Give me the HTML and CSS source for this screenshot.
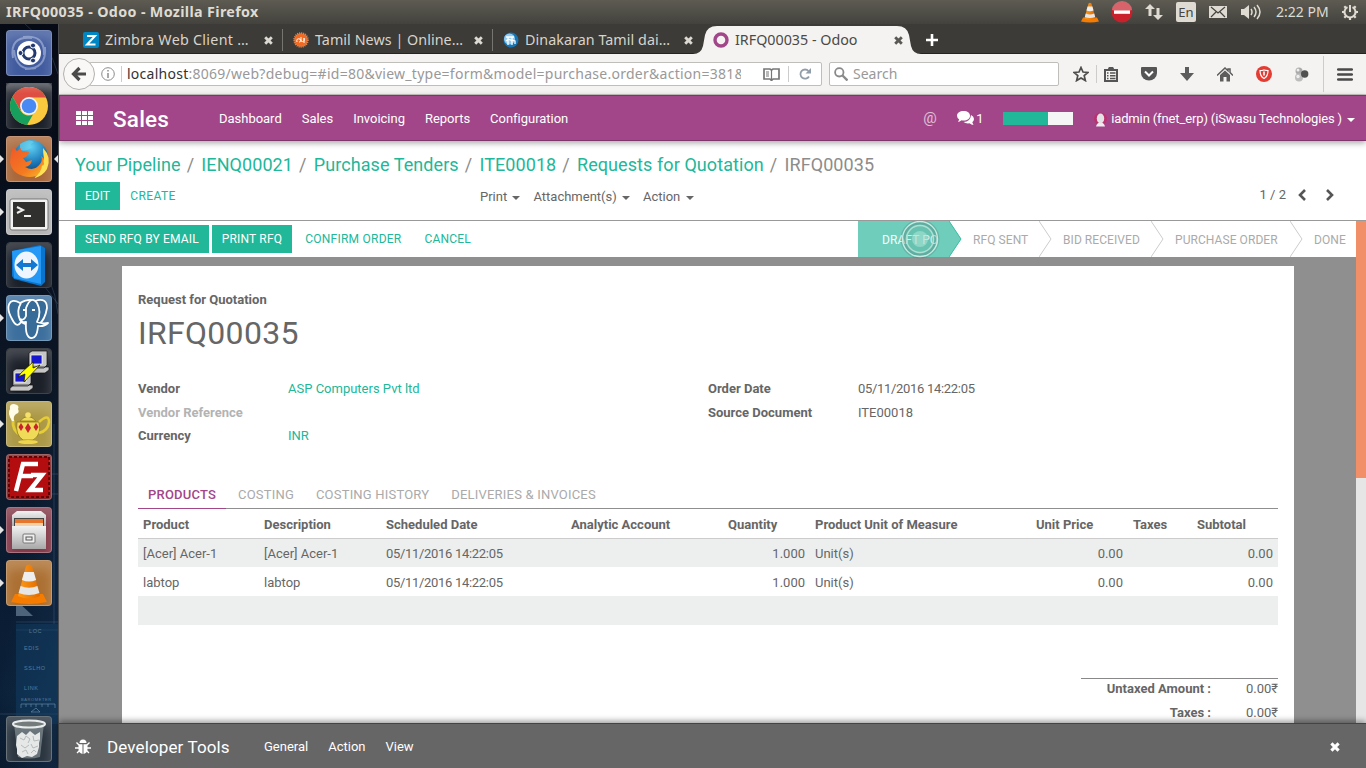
FILE: index.html
```html
<!DOCTYPE html>
<html lang="en">
<head>
<meta charset="utf-8">
<title>IRFQ00035 - Odoo</title>
<link rel="stylesheet" href="styles.css">
</head>
<body>
<svg class="defs" width="0" height="0" aria-hidden="true">
  <defs>
    <linearGradient id="gloss" x1="0" y1="0" x2="0" y2="1"><stop offset="0" stop-color="#fff" stop-opacity=".45"/><stop offset=".5" stop-color="#fff" stop-opacity=".05"/><stop offset="1" stop-color="#fff" stop-opacity="0"/></linearGradient>
    <linearGradient id="silver" x1="0" y1="0" x2="0" y2="1"><stop offset="0" stop-color="#f2f2f2"/><stop offset="1" stop-color="#a8a8a8"/></linearGradient>
    <linearGradient id="orange" x1="0" y1="0" x2="1" y2="0"><stop offset="0" stop-color="#ff9c1a"/><stop offset="1" stop-color="#e06a00"/></linearGradient>
    <radialGradient id="globe" cx=".5" cy=".2" r=".8"><stop offset="0" stop-color="#5fd0f2"/><stop offset=".6" stop-color="#1b78b8"/><stop offset="1" stop-color="#0d3c74"/></radialGradient>
    <linearGradient id="flame" x1="0" y1="0" x2="1" y2="1"><stop offset="0" stop-color="#f0582a"/><stop offset=".6" stop-color="#f47a20"/><stop offset="1" stop-color="#f9c22b"/></linearGradient>
    <symbol id="x" viewBox="0 0 10 10"><path d="M2 2l6 6M8 2l-6 6" stroke="currentColor" stroke-width="2.6"/></symbol>
    <symbol id="cone" viewBox="0 0 36 40"><path d="M4 30h28l4 8q-18 4-36 0z" fill="#f57c00"/><path d="M15 2q3-3 6 0l8 30q-11 5-22 0z" fill="url(#orange)"/><path d="M13.2 8h9.600l2.300 8q-7 3-14.200 0z" fill="#eee"/><path d="M9.600 22q8.400 3.500 16.800 0l2 7q-10.400 4-20.800 0z" fill="#e6e6e6"/></symbol>
  </defs>
</svg>
<header class="panel">
  <span class="panel-title">IRFQ00035 - Odoo - Mozilla Firefox</span>
  <div class="tray">
    <svg width="18" height="21"><use href="#cone"/></svg>
    <svg width="22" height="22" viewBox="0 0 22 22"><circle cx="11" cy="11" r="10.500" fill="#c9202b"/><path d="M1 9a10 9 0 0 1 20 0q-10 4-20 0" fill="#fff" opacity=".3"/><rect x="3" y="9.500" width="16" height="3.300" fill="#fff"/></svg>
    <svg width="18" height="18" viewBox="0 0 18 18" fill="#dfdbd2"><path d="M5 1l5 5H6.500v7h-3V6H0zM13 17l5-5h-3.500V5h-3v7H8z"/></svg>
    <span class="lang">En</span>
    <svg width="18" height="12" viewBox="0 0 18 12"><rect width="18" height="12" fill="#dfdbd2"/><path d="M2 1l7 6 7-6M2 11l5-5M16 11l-5-5" fill="none" stroke="#45443f" stroke-width="1.200"/></svg>
    <svg width="20" height="16" viewBox="0 0 20 16"><path d="M0 5h3l5-4v14l-5-4H0z" fill="#dfdbd2"/><path d="M10 5q2 3 0 6M13 3q4 5 0 10M16 1q6 7 0 14" fill="none" stroke="#dfdbd2" stroke-width="1.500"/></svg>
    <span class="clock">2:22 PM</span>
    <svg width="18" height="18" viewBox="0 0 18 18" fill="none" stroke="#dfdbd2"><path d="M6.500 4.100a5.500 5.500 0 1 0 5 0M9 2v7" stroke-width="2"/><path d="M9 17v-3M1 9h3M14 9h3M3.300 14.700l2-2M14.700 14.700l-2-2M3.300 3.300l2 2M14.700 3.300l-2 2" stroke-width="2.200"/></svg>
  </div>
</header>
<div class="desktop">
  <nav class="launcher">
    <svg class="wall" width="58" height="744" viewBox="0 0 58 744"><g fill="none" stroke="#5f88ad" stroke-width=".8" opacity=".35"><path d="M25 0q25 20 33 50M30 230q24 20 28 60M35 250l23 30M16 450h42M16 470h42M54 400v200M36 560l10 8M16 598h42M16 606h42M0 690h58"/></g><path d="M16 592L33 592L16 576z" fill="#8da7bd" opacity=".5"/><path d="M16 600h42v100H16z" fill="#123d63" opacity=".5"/><g fill="#8bb3d4" opacity=".55" font-family="Liberation Sans" font-size="5.500" letter-spacing=".6"><text x="29" y="609">LOC</text><text x="24" y="626">EDIS</text><text x="24" y="646">SSLHO</text><text x="24" y="666">LINK</text><text x="21" y="677" font-size="4">BAROMETER</text></g><path d="M21 684v-4h34v4M26 680v3M31 680v3M36 680v3M42 680v3M48 680v3M31 688l5-4 4 4z" stroke="#6f95b5" fill="none" opacity=".6"/></svg>
    <div class="app app-dash"><svg viewBox="0 0 46 46"><g fill="none" stroke="#b9c6e6" stroke-width="2" opacity=".55"><path d="M7 28Q3 6 26 8M17 7q22-3 21 18M39 17q2 22-20 22M30 38Q10 42 8 20"/></g><circle cx="23" cy="23" r="12" fill="#fff"/><circle cx="23" cy="23" r="6" fill="none" stroke="#223a70" stroke-width="3"/><g fill="#223a70" stroke="#fff" stroke-width="1"><circle cx="14.500" cy="23" r="2.500"/><circle cx="27" cy="15.500" r="2.500"/><circle cx="27" cy="30.500" r="2.500"/></g></svg></div>
    <div class="app app-dark"><svg viewBox="0 0 46 46"><circle cx="23" cy="23" r="19" fill="#fbc93d"/><path d="M6.500 13.500A19 19 0 0 1 40 14.500H23L14.600 27.500z" fill="#dd4b3e"/><path d="M6.500 13.500l8.200 14.500A9.500 9.500 0 0 0 27 31.500L21 42A19 19 0 0 1 6.500 13.500z" fill="#17a05d"/><circle cx="23" cy="23" r="9" fill="#f2f2f2"/><circle cx="23" cy="23" r="7.300" fill="#4889f4"/><rect width="46" height="20" fill="url(#gloss)" opacity=".5"/></svg></div>
    <div class="app app-fox run focus"><svg viewBox="0 0 46 46"><circle cx="25" cy="21" r="17" fill="url(#globe)"/><path d="M14 8q9-6 14-2-5 2-3 6-5 4-11 2z" fill="#6fd3ee" opacity=".6"/><path d="M7 11l4 4 4-3v3l8 1q-1 5-6 6l3 4 6-2q-1 6-7 7 9 5 15-3 3-4 1-8 5 3 4 8l2-11q3 13-5 20-9 6-19 3Q5 36 4 26q0-8 3-15z" fill="url(#flame)"/><path d="M37 12q9 9 4 21-4 7-13 9 8-6 8-13 1 2 2-1-1-3 0-5-1-6-1-11z" fill="#ffe153"/></svg></div>
    <div class="app app-grey run"><svg viewBox="0 0 46 46"><rect x="4" y="10" width="38" height="31" rx="2" fill="#f2f2f2" stroke="#777"/><rect x="7" y="13" width="32" height="25" fill="#30312f"/><path d="M11 18l6 3-6 3" fill="none" stroke="#eee" stroke-width="2"/><path d="M18 27h7" stroke="#eee" stroke-width="2"/></svg></div>
    <div class="app app-dark"><svg viewBox="0 0 46 46"><path d="M6 9L34 3l5 3v34l-4 4L8 37l-2-3z" fill="#0874ce"/><path d="M6 9l29-5v38L8 36z" fill="#2599f5"/><ellipse cx="20.500" cy="23" rx="12" ry="13.500" fill="#eef5fc"/><path d="M10 23l7-6v4h8v-4l7 6-7 6v-4h-8v4z" fill="#1278d2"/></svg></div>
    <div class="app app-pg run"><svg viewBox="0 0 46 46" fill="#376b98" stroke="#fff" stroke-width="1.800" stroke-linejoin="round"><path d="M14 8C3 1-1 12 6 24q5 10 9 3l4 2h14q6-4 8-16Q41 2 29 6q-6-3-15 2z"/><path d="M15 8q-5 8-1 17l4 3M31 8q5 9 0 19 5 2 11 1-4 4-10 3-1 13-7 12-6-1-5-16-6 1-6-3 4 2 6-3V13Q25 0 31 8z"/><path d="M17 15h3M29 15h-3" stroke-width="2"/></svg></div>
    <div class="app app-dark"><svg viewBox="0 0 46 46" stroke="#111" stroke-width=".7"><g id="pc"><path d="M23 5l3-2h15v14l-3 3H23zM20 22l4-3h19v3l-4 3H20z" fill="#c6c6c6"/><path d="M25 7h11v9H25z" fill="#1717ce" stroke="#fff"/></g><use href="#pc" x="-16" y="18"/><path d="M15 25l12-11v6l7-3-16 17 1-8-7 3z" fill="#ff0"/></svg></div>
    <div class="app app-lamp run"><svg viewBox="0 0 46 46"><path d="M15 34q-9-4-8-15" fill="none" stroke="#e2cb36" stroke-width="3"/><path d="M11 21h22q3 13-6 18H17q-8-5-6-18zM14 20q8-9 16 0z" fill="#f0db58" stroke="#8f7a1c" stroke-width=".8"/><path d="M33 21q10-9 10 0-1 9-10 11" fill="none" stroke="#e7cd36" stroke-width="2.500"/><ellipse cx="22" cy="41" rx="10" ry="2" fill="#eed54c"/><circle cx="22" cy="14" r="2.800" fill="#f4e06a"/><g fill="#c9242d"><path d="M15 22l2.500 4-2.500 4-2.500-4zM22 22l3 5-3 5-3-5zM30 22l2.500 4-2.500 4-2.500-4z"/></g><path d="M6 20Q1 12 4 8q-1-5 4-5 6 1 4 5 2 4-2 5-3 2-2 7z" fill="#fffde8"/></svg></div>
    <div class="app app-fz"><svg viewBox="0 0 46 46"><rect x="3" y="3" width="40" height="40" fill="#b30d10" stroke="#600" stroke-width="2" stroke-dasharray="3 2"/><g stroke="#fff" stroke-width="4.500" fill="none"><path d="M10 37l7-27h15M14 22h13M25 21h11L24 36h13"/></g></svg></div>
    <div class="app app-files run"><svg viewBox="0 0 46 46"><path d="M6 8l5-4h24l5 4v12H6z" fill="url(#silver)"/><rect x="8" y="11" width="30" height="8" fill="#444"/><path d="M9 12h28v7H9z" fill="#e6762d"/><path d="M9 16h28v3H9z" fill="#f7d0a5"/><path d="M6 19h34v23H6z" fill="url(#silver)"/><rect x="17" y="27" width="12" height="9" rx="1" fill="#eee" stroke="#777"/><rect x="20" y="30" width="6" height="3" fill="none" stroke="#555"/></svg></div>
    <div class="app app-vlc run"><svg viewBox="-5 -4 46 46"><svg width="36" height="40"><use href="#cone"/></svg></svg></div>
    <div class="app app-trash"><svg viewBox="0 0 46 46"><path d="M8 8h30l-4 33q-11 3-22 0z" fill="#9da9a9" opacity=".55"/><path d="M11 20l5-4 4 3 4-4 5 4 5-3v7l-1 4v4l-2 7-5 3-5-1-5 2-5-4v-5l-1-4z" fill="#e6e8e8"/><path d="M14 22l4 2 2-4 4 3-2 4M27 20l1 5 5-1M15 29l4 3 4-3M25 28l2 4 5-2M16 36l4-2 2 4M25 37l3-3 2 2" fill="none" stroke="#b4baba"/><ellipse cx="23" cy="8" rx="16" ry="3.500" fill="#737b7b" stroke="#e8ecec" stroke-width="2"/></svg></div>
  </nav>
  <main class="browser">
    <div class="tabs">
      <div class="tab"><svg class="fav" viewBox="0 0 16 16"><rect width="16" height="16" rx="2" fill="#0087c3"/><path d="M4 4h8l-8 8.500h8.500" fill="none" stroke="#fff" stroke-width="2"/></svg><span class="t t1">Zimbra Web Client …</span><svg class="close"><use href="#x"/></svg></div>
      <div class="tab"><svg class="fav" viewBox="0 0 16 16"><circle cx="8" cy="8" r="6.800" fill="#f26a21" stroke="#d98a5a" stroke-width="2" stroke-dasharray="1 1"/><path d="M4 10q-1-4 3-3 2 3-1 3M8 5v4q4 2 3-3v5" fill="none" stroke="#fff"/></svg><span class="t t2">Tamil News | Online…</span><svg class="close"><use href="#x"/></svg></div>
      <div class="tab"><svg class="fav" viewBox="0 0 16 16"><circle cx="8" cy="8" r="7.500" fill="#1675b5"/><circle cx="6.500" cy="7" r="5.500" fill="#8fcaf0"/><path d="M3 5h8M5 5v4M3 9q3-3 6 0v4M9 5v3l3 1v3M5 9v4" fill="none" stroke="#fff" stroke-width="1.300"/></svg><span class="t t3">Dinakaran Tamil dai…</span><svg class="close"><use href="#x"/></svg></div>
      <div class="tab active"><svg class="tab-shape" viewBox="0 0 228 28" width="228" height="28"><path d="M0 28q8 0 10-8l2-11Q14 0 24 0h180q10 0 12 9l2 11q2 8 10 8z" fill="#f4f3f1"/></svg><svg class="fav" viewBox="0 0 16 16"><circle cx="8" cy="8" r="6" fill="none" stroke="#a24689" stroke-width="3.400"/></svg><span class="t t4">IRFQ00035 - Odoo</span><svg class="close"><use href="#x"/></svg></div>
      <svg class="plus" viewBox="0 0 14 14"><path d="M7 1v12M1 7h12" stroke="#fff" stroke-width="2.600"/></svg>
    </div>
    <div class="toolbar">
      <div class="back"><svg width="16" height="16" viewBox="0 0 16 16"><path d="M15 8H3M8.500 2L2.500 8l6 6" fill="none" stroke="#4a4a4a" stroke-width="3.200"/></svg></div>
      <div class="url">
        <svg width="14" height="14" viewBox="0 0 14 14" fill="none" stroke="#8c8c8c"><circle cx="7" cy="7" r="6.300"/><path d="M7 3v1.600M7 6v5" stroke-width="1.500"/></svg>
        <i class="sep"></i>
        <span class="addr"><b>localhost</b>:8069/web?debug=#id=80&amp;view_type=form&amp;model=purchase.order&amp;action=381&amp;</span>
        <svg width="17" height="13" viewBox="0 0 17 13" fill="none" stroke="#777"><path d="M1 1h6l1.500 1L10 1h6v10h-6l-1.500 1.500L7 11H1z" stroke-width="1.700"/><path d="M8.500 2v10M3 4h3M3 6h3M3 8h3" stroke-width="1.200"/></svg>
        <i class="sep s2"></i>
        <svg width="12" height="12" viewBox="0 0 12 12"><path d="M10 8.500A4.600 4.600 0 1 1 9.500 3" fill="none" stroke="#919da9" stroke-width="1.800"/><path d="M12 0v5.500H6.500z" fill="#919da9"/></svg>
      </div>
      <div class="search"><svg width="14" height="14" viewBox="0 0 14 14" fill="none" stroke="#8a8a8a"><circle cx="5.300" cy="5.300" r="4.200" stroke-width="1.800"/><path d="M8.500 8.500l5 5" stroke-width="2.400"/></svg><span>Search</span></div>
      <div class="tools">
        <svg width="16" height="16" viewBox="0 0 16 16"><path d="M8 1.500l2 4.500 5 .4-3.800 3.200 1.200 5L8 12l-4.400 2.600 1.200-5L1 6.400 6 6z" fill="none" stroke="#4d4d4d" stroke-width="1.700"/></svg><i class="vs"></i>
        <svg width="14" height="15" viewBox="0 0 14 15"><path d="M1 3h12v11H1zM4.500 3l1-2h3l1 2" fill="none" stroke="#555" stroke-width="2"/><path d="M3 6h1.500M6 6h5.500M3 8.800h1.500M6 8.800h5.500M3 11.500h1.500M6 11.500h5.500" stroke="#555" stroke-width="1.400"/></svg>
        <svg width="16" height="14" viewBox="0 0 16 14"><path d="M1 0h14q1 0 1 1v5a8 7.500 0 0 1-16 0V1q0-1 1-1z" fill="#555"/><path d="M4 4.500l4 4 4-4" fill="none" stroke="#fff" stroke-width="2"/></svg>
        <svg width="14" height="14" viewBox="0 0 14 14"><path d="M5 0h4v6h5l-7 8-7-8h5z" fill="#5c5c5c"/></svg>
        <svg width="16" height="15" viewBox="0 0 16 15"><path d="M0 8.500L8 1l3 2.700V2h2v3.500l3 3" fill="none" stroke="#5c5c5c" stroke-width="1.500"/><path d="M3 8l5-4.500L13 8v6.500H9.500V10h-3v4.500H3z" fill="#5c5c5c"/></svg>
        <svg width="16" height="16" viewBox="0 0 16 16"><circle cx="8" cy="8" r="8" fill="#e43c32"/><path d="M4 4.500q4 0 4-1 0 1 4 1 0 6-4 8-4-2-4-8z" fill="none" stroke="#fff" stroke-width="1.200"/><path d="M8 5.500v4" stroke="#fff" stroke-width="1.600"/></svg>
        <svg width="14" height="15" viewBox="0 0 14 15"><circle cx="4" cy="4" r="3.500" fill="#aaa"/><circle cx="4" cy="10.500" r="4" fill="#bcbcbc"/><circle cx="9.700" cy="7" r="3.700" fill="#505050"/><circle cx="3" cy="3" r="1.500" fill="#eee"/><circle cx="3" cy="9.500" r="1.700" fill="#eee"/></svg>
        <i class="vs v2"></i>
        <svg width="16" height="13" viewBox="0 0 16 13"><path d="M1.200 1.500h13.600M1.200 6.500h13.600M1.200 11.500h13.600" stroke="#4a4a4a" stroke-width="2.600" stroke-linecap="round"/></svg>
      </div>
    </div>
    <div class="odoo">
      <nav class="menu">
        <svg class="grid" width="17" height="14" viewBox="0 0 17 14" fill="#fff"><path d="M0 0h5v4H0zM6 0h5v4H6zM12 0h5v4h-5zM0 5h5v4H0zM6 5h5v4H6zM12 5h5v4h-5zM0 10h5v4H0zM6 10h5v4H6zM12 10h5v4h-5z"/></svg>
        <span class="brand">Sales</span>
        <div class="links"><a>Dashboard</a><a>Sales</a><a>Invoicing</a><a>Reports</a><a>Configuration</a></div>
        <div class="user">
          <span class="at">@</span>
          <svg width="17" height="14" viewBox="0 0 17 14" fill="#fff"><path d="M6.500 0c4 0 6.500 2 6.500 4.700S10.500 9.500 6.500 9.500q-1 0-2-.2Q2.500 11 1 11l1.200-2.600Q0 7 0 4.700C0 2 3 0 6.500 0z"/><path d="M14 4q3 1.500 3 4 0 1.800-1.700 3.200L16.500 14q-2 0-4-1.700-3.500.6-6-1.300 7-.2 7.500-7z"/></svg><span class="one">1</span>
          <div class="progress"><i></i></div>
          <svg class="avatar" width="13" height="15" viewBox="0 0 13 15"><circle cx="6.500" cy="7" r="6.500" fill="#ba3170"/><path d="M2 14.500q1-4 4.500-4t4.500 4z" fill="#eee"/><ellipse cx="6.500" cy="6.500" rx="3.700" ry="5" fill="#e2e3e4"/></svg>
          <span class="name">iadmin (fnet_erp) (iSwasu Technologies )</span><i class="caret"></i>
        </div>
      </nav>
      <section class="control">
        <div class="crumbs"><a>Your Pipeline</a><i>/</i><a>IENQ00021</a><i>/</i><a>Purchase Tenders</a><i>/</i><a>ITE00018</a><i>/</i><a>Requests for Quotation</a><i>/</i><span>IRFQ00035</span></div>
        <div class="actions">
          <button class="btn primary b0">EDIT</button><button class="btn b1">CREATE</button>
          <div class="drops"><span>Print <i class="caret"></i></span><span>Attachment(s) <i class="caret"></i></span><span>Action <i class="caret"></i></span></div>
          <div class="pager"><span>1 / 2</span><svg width="8" height="12" viewBox="0 0 8 12"><path d="M7 1L2 6l5 5" fill="none" stroke="#555" stroke-width="2.600"/></svg><svg width="8" height="12" viewBox="0 0 8 12"><path d="M1 1l5 5-5 5" fill="none" stroke="#555" stroke-width="2.600"/></svg></div>
        </div>
      </section>
      <div class="view">
        <div class="content">
          <div class="status">
            <button class="btn primary">SEND RFQ BY EMAIL</button><button class="btn primary b2">PRINT RFQ</button><button class="btn b3">CONFIRM ORDER</button><button class="btn b4">CANCEL</button>
            <div class="steps">
              <div class="step now"><svg class="arrow" width="13" height="36" viewBox="0 0 13 36"><path d="M0 0l12 18L0 36z" fill="#6ecebb"/><path d="M0 0l12 18L0 36" fill="none" stroke="#35bba0"/></svg>DRAFT PO<svg class="click" width="42" height="42" viewBox="0 0 42 42"><circle cx="21" cy="21" r="18" fill="#45695f" opacity=".12"/><circle cx="21" cy="21" r="17" fill="none" stroke="#456" stroke-width="5" opacity=".2"/><circle cx="21" cy="21" r="17.500" fill="none" stroke="#c5ede3" stroke-width="1.400"/><circle cx="21" cy="21" r="13.500" fill="none" stroke="#b0dfd4" stroke-width="1.400"/><circle cx="21" cy="21" r="8" fill="#a9e2d6" opacity=".6"/></svg></div>
              <div class="step p2">RFQ SENT<svg class="arrow" width="13" height="36" viewBox="0 0 13 36"><path d="M0 0l12 18L0 36" fill="none" stroke="#ccc"/></svg></div>
              <div class="step p3">BID RECEIVED<svg class="arrow" width="13" height="36" viewBox="0 0 13 36"><path d="M0 0l12 18L0 36" fill="none" stroke="#ccc"/></svg></div>
              <div class="step p4">PURCHASE ORDER<svg class="arrow" width="13" height="36" viewBox="0 0 13 36"><path d="M0 0l12 18L0 36" fill="none" stroke="#ccc"/></svg></div>
              <div class="step p5">DONE</div>
            </div>
          </div>
          <div class="sheet">
            <div class="kind">Request for Quotation</div>
            <h1>IRFQ00035</h1>
            <div class="fields">
              <b>Vendor</b><a>ASP Computers Pvt ltd</a><b>Order Date</b><span class="date">05/11/2016 14:22:05</span>
              <b class="muted">Vendor Reference</b><span></span><b>Source Document</b><span>ITE00018</span>
              <b>Currency</b><a>INR</a>
            </div>
            <div class="nb"><span class="on">PRODUCTS</span><span>COSTING</span><span>COSTING HISTORY</span><span>DELIVERIES &amp; INVOICES</span></div>
            <table>
              <colgroup><col class="c1"><col class="c2"><col class="c3"><col class="c4"><col class="c5"><col class="c6"><col class="c7"><col class="c8"><col class="c9"></colgroup>
              <thead><tr><th>Product</th><th>Description</th><th>Scheduled Date</th><th>Analytic Account</th><th>Quantity</th><th>Product Unit of Measure</th><th>Unit Price</th><th>Taxes</th><th>Subtotal</th></tr></thead>
              <tbody>
                <tr><td>[Acer] Acer-1</td><td>[Acer] Acer-1</td><td class="date">05/11/2016 14:22:05</td><td></td><td class="r">1.000</td><td>Unit(s)</td><td class="r">0.00</td><td></td><td class="r">0.00</td></tr>
                <tr><td>labtop</td><td>labtop</td><td class="date">05/11/2016 14:22:05</td><td></td><td class="r">1.000</td><td>Unit(s)</td><td class="r">0.00</td><td></td><td class="r">0.00</td></tr>
                <tr><td colspan="9"></td></tr>
              </tbody>
            </table>
            <div class="totals"><b>Untaxed Amount :</b><span>0.00₹</span><b>Taxes :</b><span>0.00₹</span></div>
          </div>
        </div>
        <div class="scroll"><i></i></div>
      </div>
      <footer class="dev">
        <svg width="16" height="16" viewBox="0 0 16 16" fill="none" stroke="#fff"><path d="M4.500 4a3.500 3.500 0 0 1 7 0z" fill="#fff" stroke="none"/><path d="M3.500 5.300h4V15q-4-1-4-5zM12.500 5.300h-4V15q4-1 4-5z" fill="#fff" stroke="none"/><path d="M4 6L1.500 3.500M0 9h4M4.500 11.500L2 14M12 6l2.500-2.500M16 9h-4M11.500 11.500L14 14" stroke-width="1.400"/></svg>
        <strong>Developer Tools</strong><a>General</a><a>Action</a><a>View</a>
        <svg class="dev-x" width="12" height="12"><use href="#x"/></svg>
      </footer>
    </div>
  </main>
</div>
</body>
</html>
```
FILE: styles.css
```css
* { box-sizing: border-box; }
body { margin: 0; width: 1366px; height: 768px; overflow: hidden; display: flex; flex-direction: column; font: 13px/20px Roboto, "Liberation Sans", sans-serif; color: #666; background: #3c3b37; }
.defs { position: absolute; }
svg { flex: none; display: block; }
i { font-style: normal; }

.panel { height: 24px; flex: none; display: flex; align-items: center; justify-content: space-between; padding: 0 7px 0 6px; background: linear-gradient(#5d5b52, #43423d); color: #dfdbd2; font-family: "Noto Sans", sans-serif; }
.panel-title { font-weight: 700; font-size: 14.300px; letter-spacing: .35px; white-space: nowrap; }
.tray { display: flex; align-items: center; }
.tray > svg:nth-child(2) { margin-left: 12px; }
.tray > svg:nth-child(3) { margin-left: 12px; }
.lang { width: 20px; height: 20px; margin: 0 13px 0 13px; border-radius: 2px; background: #dfdbd2; color: #45443f; font-size: 13px; line-height: 20px; text-align: center; }
.tray > svg:nth-child(6) { margin-left: 14px; }
.clock { width: 54px; margin: 0 11px 0 15px; font-size: 14px; white-space: nowrap; letter-spacing: 0; }

.desktop { flex: 1; display: flex; min-height: 0; }
.launcher { position: relative; width: 59px; flex: none; display: flex; flex-direction: column; gap: 7px; padding: 6px 6px 6px; border-right: 1px solid #4b4d50; background: linear-gradient(100deg, transparent 60%, rgba(40, 80, 120, .3)), linear-gradient(#060a15, #0b1625 50%, #0a1c33 78%, #0a2038 90%, #081628); }
.wall { position: absolute; left: 0; top: 0; }
.app { position: relative; width: 46px; height: 46px; flex: none; border: 1px solid rgba(255, 255, 255, .3); border-radius: 4px; box-shadow: inset 0 8px 12px rgba(255, 255, 255, .2); }
.app > svg { width: 46px; height: 46px; margin: -1px; }
.app-dash { background: #405b9e; }
.app-dark { background: #1c2029; border-color: #3e4349; }
.app-fox { background: #a9683b; }
.app-grey { background: #b4b4b4; }
.app-pg { background: #3c6f9d; }
.app-lamp { background: #ac9845; }
.app-fz { background: #7c2426; }
.app-files { background: #833948; }
.app-vlc { background: #ac7032; }
.app-trash { margin-top: auto; background: #29343f; }
.run::before { content: ""; position: absolute; left: -7px; top: 18px; border: 4px solid transparent; border-left-color: #e4e4e4; border-right: 0; }
.focus::after { content: ""; position: absolute; right: -7px; top: 18px; border: 4px solid transparent; border-right-color: #e4e4e4; border-left: 0; }

.browser { flex: 1; min-width: 0; display: flex; flex-direction: column; }
.tabs { height: 30px; flex: none; display: flex; align-items: center; padding-left: 14px; background: #3c3b37; color: #d8d4cc; font: 14.300px/20px "Noto Sans", sans-serif; box-shadow: inset 0 -1px #252422; }
.tab { width: 210px; height: 100%; display: flex; align-items: center; padding: 2px 9px 0 10px; white-space: nowrap; position: relative; }
.tab:not(.active)::after { content: ""; position: absolute; right: 0; top: 5px; height: 22px; border-right: 1px solid #77756f; }
.tab:nth-child(3)::after { display: none; }
.fav { width: 16px; height: 16px; margin-right: 6px; position: relative; }
.t { flex: 1; position: relative; }
.t1 { letter-spacing: .28px; }
.t2, .t3 { letter-spacing: .06px; }
.close { width: 11px; height: 11px; position: relative; color: #dcd9d2; }
.active { color: #4b4a47; }
.active .close { color: #5a5955; }
.tab-shape { position: absolute; left: -10px; top: 2px; }
.plus { width: 14px; height: 14px; margin: 2px 0 0 12px; }
.toolbar { height: 41px; flex: none; display: flex; align-items: center; background: #f4f3f1; border-bottom: 1px solid #c9c6c4; font: 14px/22px "Noto Sans", sans-serif; color: #999; }
.back { width: 32px; height: 32px; margin: 0 0 0 4px; border: 1px solid #b3b1ad; border-radius: 50%; background: #f9f8f7; display: grid; place-items: center; position: relative; flex: none; }
.url { width: 733px; flex: none; height: 24px; margin-left: -6px; padding: 0 10px 0 11px; border: 1px solid #c0bebb; background: #fff; display: flex; align-items: center; border-radius: 2px; }
.sep { width: 1px; height: 16px; margin: 0 5px 0 6px; background: #ccc; flex: none; }
.s2 { margin: 0 10px 0 8px; }
.addr { width: 615px; margin-right: 22px; overflow: hidden; white-space: nowrap; letter-spacing: .26px; }
.addr b { font-weight: 400; color: #333; }
.search { width: 230px; flex: none; height: 24px; margin-left: 7px; padding-left: 4px; border: 1px solid #c0bebb; border-radius: 2px; background: #fff; display: flex; align-items: center; gap: 5px; }
.tools { display: flex; align-items: center; flex: none; padding-left: 14px; }
.tools svg { margin-right: 23px; }
.tools > svg:first-child { margin-right: 7px; }
.tools > svg:last-child { margin-right: 0; }
.vs { width: 1px; height: 18px; background: #ccc; margin-right: 7px; }
.v2 { height: 36px; margin: 0 13px 0 -9px; }

.odoo { flex: 1; min-height: 0; display: flex; flex-direction: column; background: #fff; position: relative; }
.menu { height: 46px; flex: none; display: flex; align-items: center; padding-left: 16px; background: #a24689; border: solid #7c3669; border-width: 1px 0 1px 1px; color: #fff; box-shadow: 0 2px 6px rgba(0, 0, 0, .35); z-index: 1; }
.brand { width: 86px; margin-left: 20px; padding-top: 1px; font-size: 22.500px; letter-spacing: .2px; font-weight: 500; }
.links { display: flex; margin-left: 20px; padding-top: 2px; gap: 20px; letter-spacing: -.02px; }
.user { margin-left: auto; display: flex; align-items: center; padding-right: 11px; white-space: nowrap; }
.at { width: 34px; font-size: 15px; opacity: .65; }
.one { margin-left: 2px; width: 27px; padding-top: 2px; }
.progress { width: 70px; height: 13px; background: #f5f5f5; margin-right: 21px; }
.progress i { display: block; width: 64%; height: 100%; background: #21b799; }
.avatar { margin-top: 2px; }
.name { margin-left: 4px; padding-top: 2px; letter-spacing: -.13px; }
.caret { display: inline-block; border: 4px solid transparent; border-top-color: currentColor; border-bottom: 0; vertical-align: middle; margin-left: 2px; }
.name + .caret { margin-left: 5px; margin-top: 3px; }

.control { height: 80px; flex: none; padding: 12px 16px 0; border-bottom: 1px solid #999; }
.crumbs { font-size: 18px; line-height: 24px; display: flex; white-space: nowrap; color: #8c8c8c; letter-spacing: .08px; }
.crumbs i { margin: 0 7.200px 0 6px; }
a { color: #21b799; }
.menu a, .dev a { color: inherit; }
.actions { display: flex; align-items: flex-start; padding-top: 5px; height: 40px; }
.btn { height: 28px; border: 0; padding: 1px 10px 0; background: none; color: #21b799; font: 12px/27px Roboto, sans-serif; letter-spacing: .17px; white-space: nowrap; }
.b0 { width: 45px; letter-spacing: 0; }
.b1 { width: 66px; letter-spacing: .4px; }
.primary { background: #21b799; color: #fff; }
.drops { display: flex; gap: 13px; margin-left: 294px; padding-top: 5px; white-space: nowrap; }
.pager { margin-left: auto; margin-right: 16px; padding-top: 3px; display: flex; align-items: center; }
.pager span { margin-right: -1px; }
.pager svg { margin-left: 13px; }
.pager svg + svg { margin-left: 20px; }

.view { flex: 1; min-height: 0; display: flex; }
.content { flex: 1; min-width: 0; background: #8f8f8f; overflow: hidden; }
.status { height: 36px; display: flex; align-items: center; padding-left: 16px; background: #fff; }
.b2, .b3, .b4 { margin-left: 3px; }
.b3 { letter-spacing: .25px; }
.b4 { letter-spacing: .2px; }
.steps { margin-left: auto; display: flex; height: 36px; font-size: 12px; line-height: 38px; letter-spacing: .07px; color: #aaa; white-space: nowrap; }
.step { position: relative; padding-left: 24px; }
.arrow { position: absolute; right: -13px; top: 0; }
.now { width: 91px; background: #6ecebb; color: #f4fffc; }
.p2 { width: 90px; }
.p3 { width: 112px; }
.p4 { width: 139px; }
.p5 { width: 66px; }
.click { position: absolute; left: 41px; top: -3px; }
.sheet { margin: 9px 62px 0 63px; height: 600px; padding: 24px 16px; background: #fff; }
.kind { font-weight: 700; }
h1 { margin: 5px 0 0; font-weight: 400; font-size: 32px; line-height: 36px; letter-spacing: .3px; }
.fields { display: grid; grid-template-columns: 150px 420px 150px 1fr; grid-auto-rows: 23.500px; margin-top: 28px; }
.date { letter-spacing: -.31px; }
.muted { color: #b3b3b3; }
.nb { height: 30px; margin-top: 29.500px; display: flex; border-bottom: 1px solid #8f8f8f; color: #aaa; white-space: nowrap; letter-spacing: .2px; }
.nb span { height: 30px; padding: 6px 10px 0; margin-right: 2px; }
.nb .on { width: 88px; color: #a24689; font-weight: 500; border-bottom: 1px solid #a24689; }
table { width: 1140px; table-layout: fixed; border-collapse: separate; border-spacing: 0; }
.c1 { width: 121px; } .c2 { width: 122px; } .c3 { width: 185px; } .c4 { width: 157px; } .c5 { width: 87px; } .c6 { width: 221px; } .c7 { width: 97px; } .c8 { width: 64px; } .c9 { width: 86px; }
th, td { padding: 2px 5px 0; text-align: left; white-space: nowrap; height: 29px; line-height: 20px; }
th { height: 30px; border-bottom: 1px solid #ccc; padding-top: 3px; }
tbody tr:nth-child(odd) { background: #edefee; }
tbody tr:first-child td { height: 28px; }
.r { text-align: right; }
.totals { width: 197px; margin: 53px 0 0 auto; border-top: 1px solid #888; display: grid; grid-template-columns: 130px 1fr; grid-auto-rows: 24px; text-align: right; }
.scroll { width: 10px; background: #e6e6e6; }
.scroll i { display: block; height: 257px; background: #f08f68; }
.dev { height: 45px; flex: none; display: flex; align-items: center; padding: 1px 25px 0 16px; background: #666; border-top: 1px solid #444; color: #fff; box-shadow: 0 -2px 6px rgba(0, 0, 0, .4); z-index: 1; }
.dev strong { width: 137px; margin: 0 20px 0 16px; font-weight: 400; font-size: 17px; letter-spacing: .12px; white-space: nowrap; }
.dev a { margin-right: 20px; }
.dev-x { margin-left: auto; }
```
